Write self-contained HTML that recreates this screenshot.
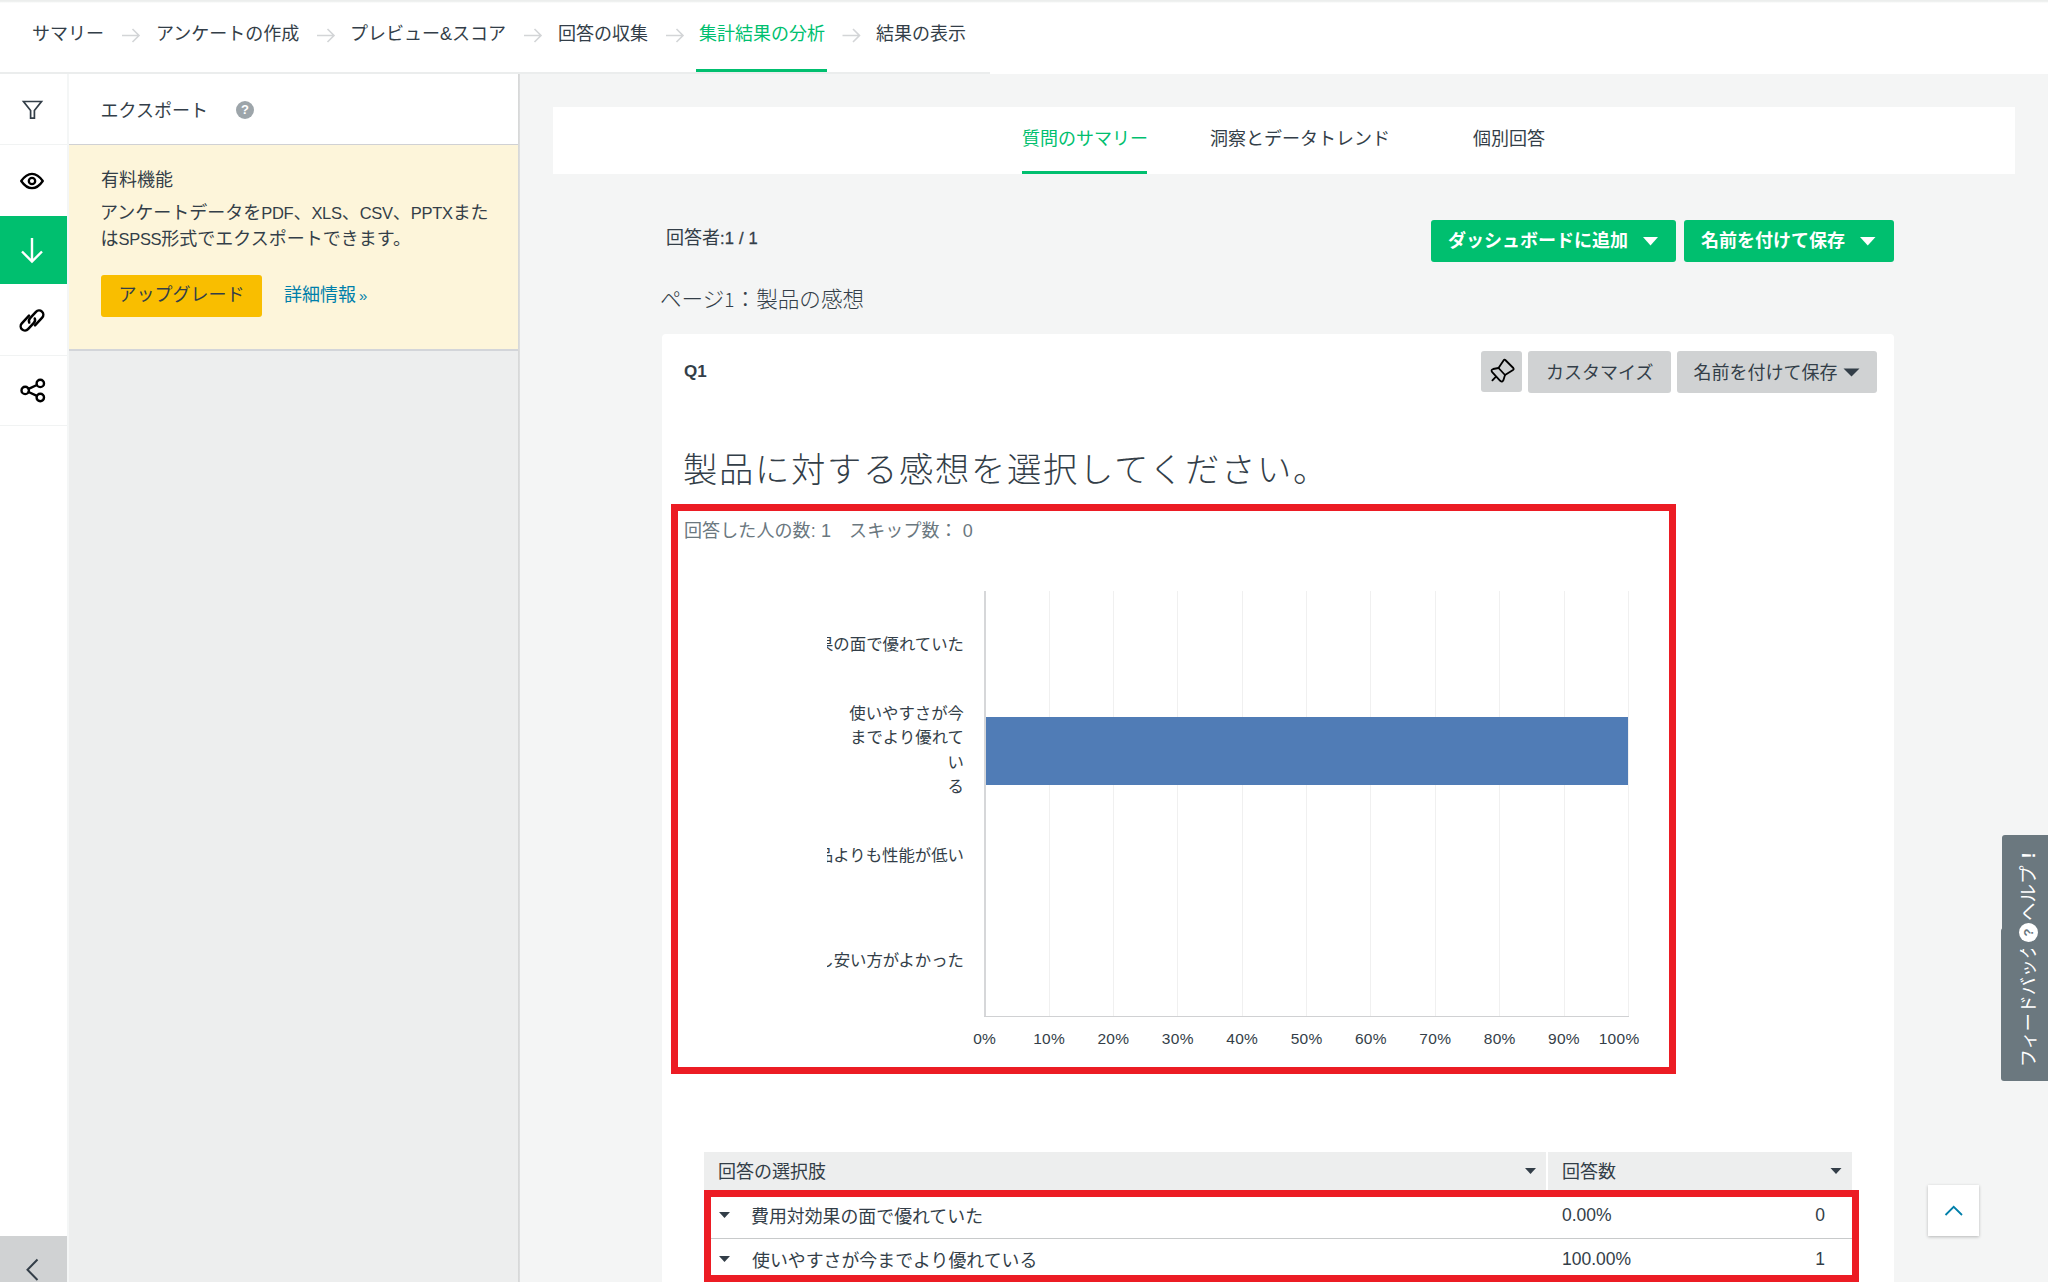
<!DOCTYPE html>
<html lang="ja">
<head>
<meta charset="utf-8">
<title>集計結果の分析</title>
<style>
html,body{margin:0;padding:0;}
body{width:2048px;height:1282px;overflow:hidden;position:relative;background:#f4f5f5;
  font-family:"Liberation Sans","Noto Sans CJK JP",sans-serif;color:#333e48;font-size:18px;}
.a{position:absolute;}
.t{position:absolute;white-space:nowrap;line-height:26px;}
.g{color:#00bf6f;}
svg{position:absolute;overflow:visible;}
.lat{font-size:16.5px;letter-spacing:-0.3px;}
/* nav */
#strip{left:0;top:0;width:2048px;height:3px;background:linear-gradient(#eceeed 0,#eceeed 40%,#fff 100%);}
#nav{left:0;top:0;width:2048px;height:74px;background:#fff;}
#navline{left:0;top:72px;width:990px;height:2px;background:#ebeded;}
.nv{top:21px;}
.arr{top:23px;}
/* sidebar */
#icons{left:0;top:74px;width:67px;height:1208px;background:#fff;}
#iconsb{left:67px;top:74px;width:2px;height:1208px;background:#f4f6f6;}
.cell{left:0;width:67px;height:1px;background:#f1f3f3;}
#panel{left:69px;top:74px;width:449px;height:1208px;background:#edeeee;}
#panelb{left:518px;top:74px;width:2px;height:1208px;background:linear-gradient(90deg,#d5d6d6,#dfe0e1);}
#phead{left:69px;top:74px;width:449px;height:70px;background:#fff;border-bottom:1px solid #d0d1d4;}
#pyel{left:69px;top:145px;width:449px;height:204px;background:#fdf5da;border-bottom:2px solid #d3d5d9;}
#upg{left:101px;top:275px;width:161px;height:42px;background:#f9be00;border-radius:3px;}
/* main */
#tabs{left:553px;top:107px;width:1462px;height:67px;background:#fff;}
.btn{height:42px;border-radius:3px;}
.gb{background:#00bf6f;top:220px;}
.gy{background:#d0d2d3;top:351px;}
#card{left:662px;top:334px;width:1232px;height:960px;background:#fff;border-radius:4px;}
.red{border:7px solid #ec1c24;box-sizing:border-box;}
.w{color:#fff;font-weight:bold;}
.gr{color:#6b787f;}
.cl{font-size:16.4px;line-height:24.6px;text-align:right;overflow:hidden;white-space:nowrap;left:827px;width:137px;direction:rtl;}
.cl span{direction:ltr;unicode-bidi:bidi-override;}
.grid{top:591px;width:1px;height:425px;background:#f0f0f0;}
.tk{font-size:15.500px;letter-spacing:0.3px;top:1026px;width:60px;text-align:center;line-height:26px;color:#333e48;}
.num{font-size:17.5px;}
</style>
</head>
<body>
<!-- top navigation -->
<div class="a" id="nav"></div>
<div class="a" id="strip"></div>
<div class="a" id="navline"></div>
<span class="t nv" style="left:32px">サマリー</span>
<span class="t nv" style="left:156px">アンケートの作成</span>
<span class="t nv" style="left:350px">プレビュー&amp;スコア</span>
<span class="t nv" style="left:558px">回答の収集</span>
<span class="t nv g" style="left:699px">集計結果の分析</span>
<span class="t nv" style="left:876px">結果の表示</span>
<div class="a" style="left:696px;top:69px;width:131px;height:3px;background:#00bf6f"></div>

<!-- left icon column -->
<div class="a" id="icons"></div>
<div class="a" id="iconsb"></div>
<div class="a cell" style="top:144px"></div>
<div class="a" style="left:0;top:216px;width:67px;height:68px;background:#00bf6f"></div>
<div class="a cell" style="top:355px"></div>
<div class="a cell" style="top:425px"></div>
<div class="a" style="left:0;top:1236px;width:67px;height:46px;background:#d0d2d3"></div>

<svg class="a" style="left:0;top:0" width="1000" height="74" fill="none" stroke="#d3d5d7" stroke-width="1.6"><path d="M122 35.5H139M132.5 29L139 35.5L132.5 42"/><path d="M317 35.5H334M327.5 29L334 35.5L327.5 42"/><path d="M524 35.5H541M534.5 29L541 35.5L534.5 42"/><path d="M666 35.5H683M676.5 29L683 35.5L676.5 42"/><path d="M842.5 35.5H859.5M853.0 29L859.5 35.5L853.0 42"/></svg>
<svg class="a" style="left:0;top:0" width="68" height="1282" fill="none" stroke-linecap="round" stroke-linejoin="round">
<path d="M23.5 101.5H41.5L34.4 110.5V118.2H30.6V110.5Z" stroke="#333e48" stroke-width="1.7" stroke-linejoin="miter"/>
<path d="M21.2 181C25 175.5 28.5 173.8 32 173.8S39 175.500 42.800 181C39 186.500 35.500 188.200 32 188.200S25 186.500 21.200 181Z" stroke="#000" stroke-width="2.3"/>
<circle cx="32" cy="181" r="3.2" stroke="#000" stroke-width="2.3"/>
<path d="M32 238V261.5M22 251.5L32 261.5L42 251.5" stroke="#fff" stroke-width="2.4" stroke-linecap="butt" stroke-linejoin="miter"/>
<g stroke="#000" stroke-width="2.5" transform="translate(32 320.5) rotate(-47)">
<path d="M1.5 -5.5H-9A4.25 4.25 0 0 0 -9 3H-0.5A4.25 4.25 0 0 0 3.4 0.6"/>
<path d="M-1.5 5.500H9A4.25 4.25 0 0 0 9 -3H0.500A4.25 4.25 0 0 0 -3.400 -0.600"/>
</g>
<g stroke="#000" stroke-width="2.400">
<circle cx="25.200" cy="390.400" r="3.700"/><circle cx="40.300" cy="383.400" r="3.700"/><circle cx="40.300" cy="397.500" r="3.700"/>
<path d="M28.600 388.800L36.900 385M28.600 392L36.900 395.900"/>
</g>
<path d="M37.500 1259.500L27.500 1269.800L37.500 1280" stroke="#333e48" stroke-width="2" stroke-linecap="butt" stroke-linejoin="miter"/>
</svg>
<!-- export panel -->
<div class="a" id="panel"></div>
<div class="a" id="panelb"></div>
<div class="a" id="phead"></div>
<span class="t" style="left:100.5px;top:97.500px">エクスポート</span>
<div class="a" style="left:236px;top:101px;width:18px;height:18px;border-radius:50%;background:#9da5aa;color:#fff;font-size:13px;font-weight:bold;line-height:18px;text-align:center">?</div>
<div class="a" id="pyel"></div>
<span class="t" style="left:101px;top:167px">有料機能</span>
<span class="t" style="left:100px;top:200px">アンケートデータを<span class="lat">PDF</span>、<span class="lat">XLS</span>、<span class="lat">CSV</span>、<span class="lat">PPTX</span>また</span>
<span class="t" style="left:100.500px;top:226px">は<span class="lat">SPSS</span>形式でエクスポートできます。</span>
<div class="a" id="upg"></div>
<span class="t" style="left:118.500px;top:282px">アップグレード</span>
<span class="t" style="left:284px;top:281.500px;color:#007faa">詳細情報<span style="font-size:15px;margin-left:3px">»</span></span>

<!-- tabs card -->
<div class="a" id="tabs"></div>
<span class="t g" style="left:1022px;top:126px">質問のサマリー</span>
<div class="a" style="left:1022px;top:171px;width:125px;height:3px;background:#00bf6f"></div>
<span class="t" style="left:1210px;top:126px">洞察とデータトレンド</span>
<span class="t" style="left:1473px;top:126px">個別回答</span>

<span class="t" style="left:666px;top:225px">回答者<span style="font-size:16.5px;letter-spacing:0.2px;-webkit-text-stroke:0.3px #333e48">:1 / 1</span></span>
<div class="a btn gb" style="left:1431px;width:245px"></div>
<span class="t w" style="left:1448px;top:228px">ダッシュボードに追加</span>
<div class="a btn gb" style="left:1684px;width:210px"></div>
<span class="t w" style="left:1701px;top:228px">名前を付けて保存</span>

<span class="t" style="left:660px;top:285.500px;font-size:21.600px;font-weight:300">ページ<span style="font-family:'Noto Sans CJK JP',sans-serif;font-size:19px">1</span>：製品の感想</span>

<!-- question card -->
<div class="a" id="card"></div>
<span class="t" style="left:684px;top:358.500px;font-weight:bold;font-size:17px">Q1</span>
<div class="a btn gy" style="left:1481px;width:41px;height:41px"></div>
<div class="a btn gy" style="left:1528px;width:143px"></div>
<span class="t" style="left:1546px;top:360px">カスタマイズ</span>
<div class="a btn gy" style="left:1677px;width:200px"></div>
<span class="t" style="left:1693.500px;top:360px">名前を付けて保存</span>

<span class="t" style="left:683px;top:444.500px;font-size:34.300px;line-height:50px;font-weight:300;letter-spacing:1.700px">製品に対する感想を選択してください。</span>

<div class="a red" style="left:671px;top:504px;width:1005px;height:570px"></div>
<span class="t gr" style="left:684px;top:518px;letter-spacing:0.1px">回答した人の数: 1　スキップ数： 0</span>

<!-- chart -->
<div class="a grid" style="left:1049px"></div><div class="a grid" style="left:1113px"></div><div class="a grid" style="left:1177px"></div><div class="a grid" style="left:1242px"></div><div class="a grid" style="left:1306px"></div><div class="a grid" style="left:1370px"></div><div class="a grid" style="left:1435px"></div><div class="a grid" style="left:1499px"></div><div class="a grid" style="left:1564px"></div><div class="a grid" style="left:1628px"></div><div class="a" style="left:984px;top:591px;width:2px;height:426px;background:#d6d7d9"></div><div class="a" style="left:984px;top:1016px;width:645px;height:1px;background:#d0d1d3"></div><div class="a" style="left:986px;top:717px;width:642px;height:68px;background:#507cb6"></div>
<span class="t tk" style="left:954.7px">0%</span><span class="t tk" style="left:1019.1px">10%</span><span class="t tk" style="left:1083.4px">20%</span><span class="t tk" style="left:1147.8px">30%</span><span class="t tk" style="left:1212.2px">40%</span><span class="t tk" style="left:1276.6px">50%</span><span class="t tk" style="left:1340.9px">60%</span><span class="t tk" style="left:1405.3px">70%</span><span class="t tk" style="left:1469.7px">80%</span><span class="t tk" style="left:1534.0px">90%</span><span class="t tk" style="left:1579.5px;text-align:right">100%</span>
<div class="t cl" style="top:631.7px"><span>費用対効果の面で優れていた</span></div>
<div class="t cl" style="top:700.5px;white-space:normal"><span>使いやすさが今<br>までより優れて<br>い<br>る</span></div>
<div class="t cl" style="top:842.7px"><span>競合製品よりも性能が低い</span></div>
<div class="t cl" style="top:947.5px"><span>もう少し安い方がよかった</span></div>


<!-- table -->
<div class="a" style="left:704px;top:1152px;width:842px;height:38px;background:#edeeee"></div>
<div class="a" style="left:1548px;top:1152px;width:304px;height:38px;background:#edeeee"></div>
<span class="t" style="left:718px;top:1159px">回答の選択肢</span>
<span class="t" style="left:1562px;top:1159px">回答数</span>
<div class="a" style="left:711px;top:1238px;width:1141px;height:1px;background:#c8cacb"></div>
<span class="t" style="left:751px;top:1203.500px;font-size:17.900px">費用対効果の面で優れていた</span>
<span class="t" style="left:752px;top:1248px;font-size:17.900px">使いやすさが今までより優れている</span>
<span class="t num" style="left:1562px;top:1202px">0.00%</span>
<span class="t num" style="left:1562px;top:1246px">100.00%</span>
<span class="t num" style="left:1765px;top:1202px;width:60px;text-align:right">0</span>
<span class="t num" style="left:1765px;top:1246px;width:60px;text-align:right">1</span>
<div class="a red" style="left:704px;top:1190px;width:1155px;height:92px"></div>

<!-- floating -->
<div class="a" style="left:1928px;top:1185px;width:51px;height:51px;background:#fff;box-shadow:0 1px 3px rgba(0,0,0,.25)"></div>
<div class="a" style="left:2002px;top:835px;width:46px;height:96px;background:#6b787f;border-radius:3px 0 0 0"></div>
<div class="a" style="left:2001px;top:928px;width:47px;height:153px;background:#6b787f;border-radius:3px 0 0 3px"></div>
<div class="a" style="left:2001px;top:949px;width:47px;height:132px;overflow:hidden"><span class="t" style="color:#fff;left:14.5px;top:118px;transform-origin:0 0;transform:rotate(-90deg);line-height:26px">フィードバック</span></div>
<span class="t" style="color:#fff;left:2015.5px;top:921px;transform-origin:0 0;transform:rotate(-90deg);line-height:26px;font-size:18.5px">ヘルプ<span style="margin-left:7px;font-weight:bold">!</span></span>
<div class="a" style="left:2019px;top:923px;width:19px;height:19px;border-radius:50%;background:#fff;color:#6b787f;font-size:13px;font-weight:bold;line-height:19px;text-align:center"><span style="display:block;transform:rotate(-90deg)">?</span></div>
<svg class="a" style="left:0;top:0" width="2048" height="1282" stroke="none">
<path d="M1643 237H1658L1650.500 245.500Z" fill="#fff"/>
<path d="M1860 237H1875.500L1867.750 245.500Z" fill="#fff"/>
<path d="M1843.500 368.500H1859.500L1851.500 376.500Z" fill="#333e48"/>
<path d="M1525 1168H1536L1530.500 1174Z" fill="#333e48"/>
<path d="M1830.500 1168H1841.500L1836 1174Z" fill="#333e48"/>
<path d="M719 1212H730L724.500 1218Z" fill="#333e48"/>
<path d="M719 1256H730L724.500 1262Z" fill="#333e48"/>
<g fill="none" stroke="#000" stroke-width="1.800" stroke-linejoin="round" stroke-linecap="round">
<path d="M1503.700 360.200Q1504.500 359.200 1505.300 360L1513.300 368Q1514.200 369.200 1513 370L1505 375L1498.500 368Z"/>
<path d="M1498.500 368L1493.200 369Q1490.500 370 1492.200 372.200L1500.200 380.800Q1502.400 382.600 1503.400 380.200L1505 375"/>
<path d="M1495.800 376.800L1492.400 380.400"/>
</g>
<path d="M1945.500 1215L1953.700 1206.800L1962 1215" fill="none" stroke="#007faa" stroke-width="1.800"/>
</svg>
</body>
</html>
